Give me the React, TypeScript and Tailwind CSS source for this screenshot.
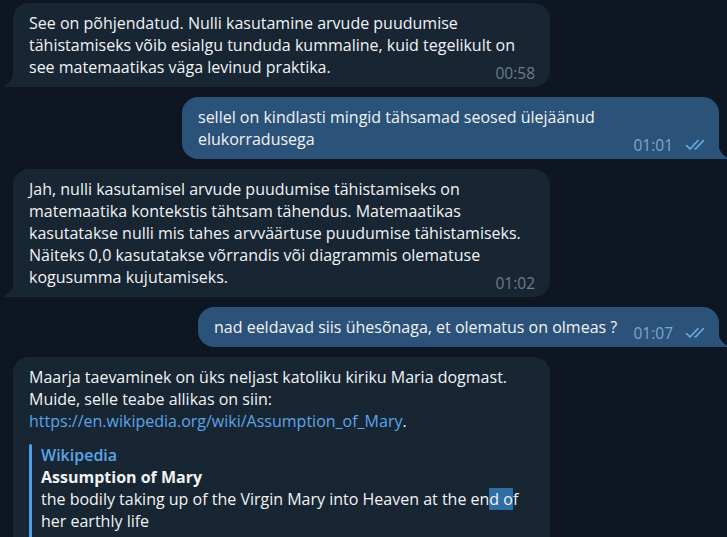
import React from 'react';
import clsx from 'clsx';

function Tail({ out, color }: { out?: boolean; color: string }) {
  return (
    <svg
      width="10"
      height="18"
      viewBox="0 0 10 18"
      className={clsx('absolute bottom-0', out ? 'right-[-9px] scale-x-[-1]' : 'left-[-9px]')}
    >
      <path d="M10 0 V18 H1.5 C0.5 18 0 17 1 16.5 C6 13.5 10 9 10 0 Z" fill={color} />
    </svg>
  );
}

function Checks() {
  return (
    <svg width="21" height="12" viewBox="0 0 21 12" fill="none" stroke="#6aacea" strokeWidth="1.6" strokeLinecap="round" strokeLinejoin="round">
      <path d="M1.5 6.5 L5 10 L13 1.5" />
      <path d="M10 9.5 L10.5 10 L18.5 1.5" />
    </svg>
  );
}

interface BubbleProps {
  out?: boolean;
  time?: string;
  className?: string;
  children: React.ReactNode;
}

function Bubble({ out, time, className, children }: BubbleProps) {
  const color = out ? '#2b5278' : '#182533';
  return (
    <div
      className={clsx(
        'relative rounded-[16px] pl-4 pr-4 pt-[9px] pb-[9px] text-[16px] leading-[22px] text-[#f1f3f5]',
        out ? 'bg-[#2b5278] rounded-br-none' : 'bg-[#182533] rounded-bl-none',
        className
      )}
    >
      {children}
      {time && (
        <div
          className={clsx(
            'absolute bottom-[6px] flex items-center gap-[12px] text-[15.5px] leading-4',
            out ? 'right-[13px] text-[#7ba7d2]' : 'right-[15px] text-[#6c7d8d]'
          )}
        >
          <span>{time}</span>
          {out && <Checks />}
        </div>
      )}
      <Tail out={out} color={color} />
    </div>
  );
}

export default function App() {
  return (
    <div className="h-[537px] w-full overflow-hidden bg-[#0e1621] pt-[3px] font-['Open_Sans',sans-serif]">
      <div className="flex flex-col gap-[10px]">
        <div className="pl-[13px]">
          <Bubble time="00:58" className="w-[537px]">
            See on põhjendatud. Nulli kasutamine arvude puudumise
            <br />
            tähistamiseks võib esialgu tunduda kummaline, kuid tegelikult on
            <br />
            see matemaatikas väga levinud praktika.
          </Bubble>
        </div>

        <div className="flex justify-end pr-[8px]">
          <Bubble out time="01:01" className="w-[537px]">
            sellel on kindlasti mingid tähsamad seosed ülejäänud
            <br />
            elukorradusega
          </Bubble>
        </div>

        <div className="pl-[13px]">
          <Bubble time="01:02" className="w-[537px]">
            Jah, nulli kasutamisel arvude puudumise tähistamiseks on
            <br />
            matemaatika kontekstis tähtsam tähendus. Matemaatikas
            <br />
            kasutatakse nulli mis tahes arvväärtuse puudumise tähistamiseks.
            <br />
            Näiteks 0,0 kasutatakse võrrandis või diagrammis olematuse
            <br />
            kogusumma kujutamiseks.
          </Bubble>
        </div>

        <div className="flex justify-end pr-[8px]">
          <Bubble out time="01:07" className="w-[521px]">
            nad eeldavad siis ühesõnaga, et olematus on olmeas ?
          </Bubble>
        </div>

        <div className="pl-[13px]">
          <Bubble className="w-[537px] pb-10">
            Maarja taevaminek on üks neljast katoliku kiriku Maria dogmast.
            <br />
            Muide, selle teabe allikas on siin:
            <br />
            <span className="text-[#5aa5ea]">https://en.wikipedia.org/wiki/Assumption_of_Mary</span>.
            <div className="mt-[12px] flex">
              <div className="w-[3px] shrink-0 rounded-[2px] bg-[#4f9ee6]" />
              <div className="pl-[9px]">
                <div className="font-semibold text-[#5aa5ea]">Wikipedia</div>
                <div className="font-bold">Assumption of Mary</div>
                <div>
                  the bodily taking up of the Virgin Mary into Heaven at the en
                  <span className="bg-[#2f6ea5]">d o</span>f
                  <br />
                  her earthly life
                </div>
                <div className="h-[60px]" />
              </div>
            </div>
          </Bubble>
        </div>
      </div>
    </div>
  );
}
